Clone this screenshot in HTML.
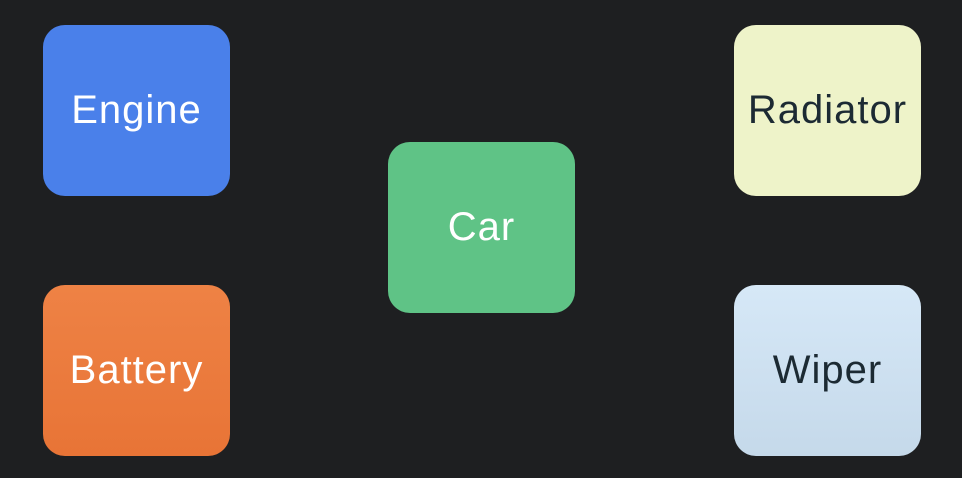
<!DOCTYPE html>
<html><head><style>
html,body{margin:0;padding:0;}
body{width:962px;height:478px;background:#1e1f21;position:relative;overflow:hidden;font-family:"Liberation Sans",sans-serif;}
.b{position:absolute;width:187px;height:171px;border-radius:22px;display:flex;align-items:center;justify-content:center;font-size:40px;letter-spacing:1px;}
</style></head><body>
<div class="b" style="left:43px;top:25px;background:#4a80ea;color:#fff;">Engine</div>
<div class="b" style="left:388px;top:142px;background:#5fc386;color:#fff;">Car</div>
<div class="b" style="left:734px;top:25px;background:#eef3c9;color:#1c2a33;">Radiator</div>
<div class="b" style="left:43px;top:285px;background:linear-gradient(#ee8245,#e87436);color:#fff;">Battery</div>
<div class="b" style="left:734px;top:285px;background:linear-gradient(#d6e8f7,#c5d9ea);color:#1c2a33;">Wiper</div>
</body></html>
